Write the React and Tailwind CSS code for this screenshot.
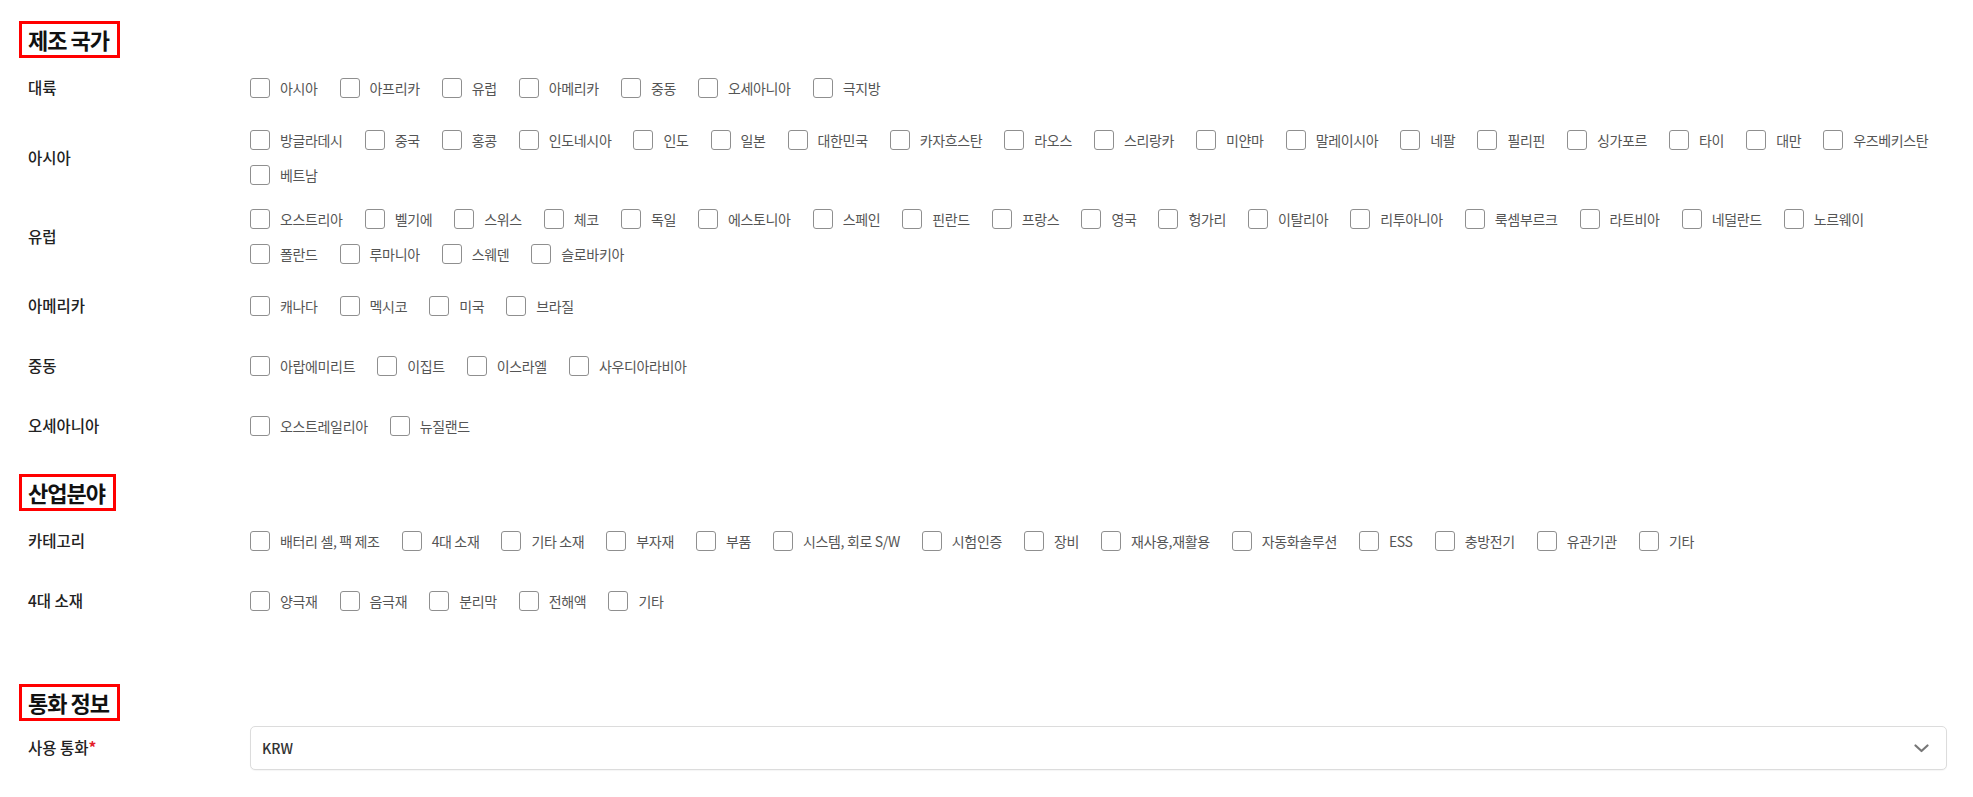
import React from "react";

const FONT = { fontFamily: "'Noto Sans CJK KR', 'Noto Sans', sans-serif" };

function Heading({ children, className = "" }) {
  return (
    <div className={className}>
      <div className="inline-flex h-[37px] items-center border-[3px] border-[#f00] pl-[6px] pr-[8px]">
        <span className="whitespace-pre text-[22px] font-bold leading-[31px] tracking-[-1px] text-[#111]">{children}</span>
      </div>
    </div>
  );
}

function Check({ label }) {
  return (
    <label className="flex h-5 items-center gap-[10px]">
      <span className="block h-5 w-5 shrink-0 rounded-[3px] border border-[#8f8f8f] bg-white" />
      <span className="whitespace-nowrap text-[14px] leading-5 tracking-[-0.35px] text-[#555]">{label}</span>
    </label>
  );
}

function Row({ label, items }) {
  return (
    <div className="flex min-h-[60px] items-center py-3">
      <div className="w-[231px] shrink-0 pl-[9px] text-[15.5px] font-medium text-[#222]">{label}</div>
      <div className="flex flex-1 flex-wrap gap-x-[22px] gap-y-[15px]">
        {items.map((it) => (
          <Check key={it} label={it} />
        ))}
      </div>
    </div>
  );
}

const section1 = [
  ["대륙", ["아시아", "아프리카", "유럽", "아메리카", "중동", "오세아니아", "극지방"]],
  [
    "아시아",
    ["방글라데시", "중국", "홍콩", "인도네시아", "인도", "일본", "대한민국", "카자흐스탄", "라오스", "스리랑카", "미얀마", "말레이시아", "네팔", "필리핀", "싱가포르", "타이", "대만", "우즈베키스탄", "베트남"],
  ],
  [
    "유럽",
    ["오스트리아", "벨기에", "스위스", "체코", "독일", "에스토니아", "스페인", "핀란드", "프랑스", "영국", "헝가리", "이탈리아", "리투아니아", "룩셈부르크", "라트비아", "네덜란드", "노르웨이", "폴란드", "루마니아", "스웨덴", "슬로바키아"],
  ],
  ["아메리카", ["캐나다", "멕시코", "미국", "브라질"]],
  ["중동", ["아랍에미리트", "이집트", "이스라엘", "사우디아라비아"]],
  ["오세아니아", ["오스트레일리아", "뉴질랜드"]],
];

const section2 = [
  ["카테고리", ["배터리 셀, 팩 제조", "4대 소재", "기타 소재", "부자재", "부품", "시스템, 회로 S/W", "시험인증", "장비", "재사용,재활용", "자동화솔루션", "ESS", "충방전기", "유관기관", "기타"]],
  ["4대 소재", ["양극재", "음극재", "분리막", "전해액", "기타"]],
];

export default function App() {
  return (
    <div style={FONT} className="min-h-[797px] w-full bg-white pl-[19px] pr-[26px] pt-[21px]">
      <Heading>제조 국가</Heading>
      <div>
        {section1.map(([l, items]) => (
          <Row key={l} label={l} items={items} />
        ))}
      </div>

      <Heading className="mt-[18px]">산업분야</Heading>
      <div>
        {section2.map(([l, items]) => (
          <Row key={l} label={l} items={items} />
        ))}
      </div>

      <Heading className="mt-[53px]">통화 정보</Heading>
      <div className="flex items-center pt-[5px]">
        <div className="w-[231px] shrink-0 pl-[9px] text-[15.5px] font-medium text-[#222]">
          사용 통화<span className="font-bold text-[#e4202a]">*</span>
        </div>
        <div className="flex h-[44px] flex-1 items-center justify-between rounded-[5px] border border-[#dcdcdc] bg-white pl-[11px] pr-[17px] shadow-[0_1px_1px_rgba(0,0,0,0.04)]">
          <span className="text-[14px] font-medium text-[#333]">KRW</span>
          <svg width="15" height="9" viewBox="0 0 15 9" fill="none">
            <path d="M1.5 1.5 L7.5 7 L13.5 1.5" stroke="#777" strokeWidth="2.2" strokeLinecap="round" strokeLinejoin="round" />
          </svg>
        </div>
      </div>
    </div>
  );
}
